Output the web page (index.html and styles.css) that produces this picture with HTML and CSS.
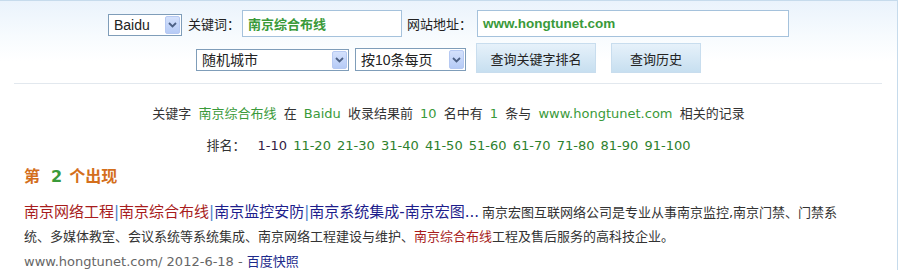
FILE: index.html
```html
<!DOCTYPE html>
<html lang="zh-CN">
<head>
<meta charset="utf-8">
<title>关键字排名查询</title>
<link rel="stylesheet" href="styles.css">
</head>
<body>
<div class="page">
  <form class="search">
    <div class="row row-top">
      <div class="sel sel-engine"><span class="sel-text">Baidu</span><span class="sel-btn"><svg viewBox="0 0 9 6" width="9" height="6"><path d="M1 1 L4.5 4.5 L8 1" fill="none" stroke="#4d6185" stroke-width="1.8"/></svg></span></div>
      <span class="lbl lbl-kw">关键词：</span>
      <div class="inp inp-kw">南京综合布线</div>
      <span class="lbl lbl-site">网站地址：</span>
      <div class="inp inp-site">www.hongtunet.com</div>
    </div>
    <div class="row row-bottom">
      <div class="sel sel-city"><span class="sel-text">随机城市</span><span class="sel-btn"><svg viewBox="0 0 9 6" width="9" height="6"><path d="M1 1 L4.5 4.5 L8 1" fill="none" stroke="#4d6185" stroke-width="1.8"/></svg></span></div>
      <div class="sel sel-per"><span class="sel-text">按10条每页</span><span class="sel-btn"><svg viewBox="0 0 9 6" width="9" height="6"><path d="M1 1 L4.5 4.5 L8 1" fill="none" stroke="#4d6185" stroke-width="1.8"/></svg></span></div>
      <button type="button" class="btn btn-rank">查询关键字排名</button>
      <button type="button" class="btn btn-hist">查询历史</button>
    </div>
  </form>
  <div class="divider"></div>
  <p class="summary">关键字 <span class="g">南京综合布线</span> 在 <span class="g">Baidu</span> 收录结果前 <span class="g">10</span> 名中有 <span class="g">1</span> 条与 <span class="g">www.hongtunet.com</span> 相关的记录</p>
  <p class="pages"><span class="pages-label">排名：</span><a class="pg cur">1-10</a> <a class="pg">11-20</a> <a class="pg">21-30</a> <a class="pg">31-40</a> <a class="pg">41-50</a> <a class="pg">51-60</a> <a class="pg">61-70</a> <a class="pg">71-80</a> <a class="pg">81-90</a> <a class="pg">91-100</a></p>
  <h3 class="occ">第<span class="occ-n">2</span>个出现</h3>
  <div class="result">
    <p class="res-body"><span class="res-title"><span class="t-red">南京网络工程</span><span class="pipe">|</span><span class="t-red">南京综合布线</span><span class="pipe">|</span><span class="t-blue">南京监控安防</span><span class="pipe">|</span><span class="t-blue">南京系统集成-南京宏图...</span></span>南京宏图互联网络公司是专业从事南京监控,南京门禁、门禁系统、多媒体教室、会议系统等系统集成、南京网络工程建设与维护、<span class="t-red">南京综合布线</span>工程及售后服务的高科技企业。</p>
    <p class="res-url">www.hongtunet.com/ 2012-6-18 - <a class="snap">百度快照</a></p>
  </div>
</div>
</body>
</html>
```

FILE: styles.css
```css
html, body {
  margin: 0;
  padding: 0;
  background: #fff;
}
body {
  font-family: "DejaVu Sans", "Noto Sans CJK SC", sans-serif;
  font-size: 13px;
  color: #333;
}
.page {
  width: 897px;
  height: 269px;
  border-top: 1px solid #c6dbec;
  border-right: 1px solid #c6dbec;
  background: linear-gradient(#eaf3fc 0, #f7fbfe 35px, #fff 60px);
  overflow: hidden;
}
.search {
  margin: 0;
  padding-top: 9px;
}
.row {
  display: flex;
  justify-content: center;
  align-items: center;
}
.row-top {
  height: 27px;
}
.row-bottom {
  margin-top: 6px;
  height: 30px;
}
/* fake XP select */
.sel {
  box-sizing: border-box;
  display: flex;
  align-items: center;
  border: 1px solid #7f9db9;
  background: #fff;
  padding: 1px;
  font-family: "Liberation Sans", "Noto Sans CJK SC", sans-serif;
  font-size: 14px;
  color: #222;
}
.sel-text {
  flex: 1;
  padding-left: 4px;
  line-height: 18px;
  white-space: nowrap;
}
.sel-btn {
  box-sizing: border-box;
  width: 15px;
  align-self: stretch;
  display: flex;
  align-items: center;
  justify-content: center;
  border: 1px solid #b6c9f2;
  border-radius: 2px;
  background: linear-gradient(#d4e1fc, #b6cbf6);
}
.sel-engine {
  width: 74px;
  height: 22px;
  margin-top: 3px;
}
.sel-city {
  width: 153px;
  height: 22px;
  margin-top: 4px;
}
.sel-per {
  width: 111px;
  height: 23px;
  margin-left: 6px;
  margin-top: 3px;
}
.lbl {
  font-family: "Noto Sans CJK SC", sans-serif;
  font-size: 13px;
  color: #222;
  line-height: 20px;
  white-space: nowrap;
}
.lbl-kw {
  margin-left: 6px;
  margin-right: 2px;
}
.lbl-site {
  margin-left: 5px;
  margin-right: 5px;
}
.inp {
  box-sizing: border-box;
  height: 27px;
  border: 1px solid #a5c2dc;
  background: #fff;
  padding: 0 5px;
  line-height: 25px;
  font-weight: bold;
  color: #3a9a3a;
  white-space: nowrap;
}
.inp-kw {
  width: 160px;
  font-family: "Noto Sans CJK SC", sans-serif;
  font-size: 13px;
}
.inp-site {
  width: 312px;
  font-family: "Liberation Sans", sans-serif;
  font-size: 13.5px;
}
.btn {
  box-sizing: border-box;
  height: 30px;
  border: 1px solid #c8ddee;
  background: linear-gradient(#e6f1fa, #c7dff0);
  font-family: "Noto Sans CJK SC", sans-serif;
  font-size: 13px;
  color: #222;
  padding: 0;
  margin: 0;
}
.btn-rank {
  width: 120px;
  margin-left: 10px;
}
.btn-hist {
  width: 90px;
  margin-left: 15px;
}
.divider {
  height: 1px;
  margin: 10px 15px 0 14px;
  background: #e2e8ee;
}
.summary {
  margin: 20px 0 0;
  text-align: center;
  line-height: 20px;
  white-space: nowrap;
}
.g {
  color: #3a9a3a;
  margin: 0 3px;
}
.pages {
  margin: 12px 0 0;
  text-align: center;
  line-height: 20px;
  word-spacing: 2px;
  white-space: nowrap;
}
.pages-label {
  margin-right: 12px;
  word-spacing: 0;
}
.pg {
  color: #2e812e;
  text-decoration: none;
}
.pg.cur {
  color: #332244;
}
.occ {
  margin: 8px 0 0 24px;
  font-family: "Noto Sans CJK SC", sans-serif;
  font-size: 16px;
  font-weight: bold;
  line-height: 22px;
  color: #d46f1c;
}
.occ-n {
  color: #3a9a3a;
  margin: 0 7px 0 11px;
  font-family: "DejaVu Sans", sans-serif;
}
.result {
  padding-left: 24px;
  width: 820px;
}
.res-body {
  margin: 12px 0 0;
  line-height: 24px;
  font-size: 13px;
  color: #333;
}
.res-title {
  font-size: 15px;
  margin-right: 3px;
}
.t-red {
  color: #a81c1c;
}
.t-blue {
  color: #1d1d8c;
}
.pipe {
  color: #4c7fcb;
}
.res-url {
  margin: 3px 0 0;
  line-height: 20px;
  color: #666;
}
.snap {
  color: #1d2a8c;
  text-decoration: none;
}
```
